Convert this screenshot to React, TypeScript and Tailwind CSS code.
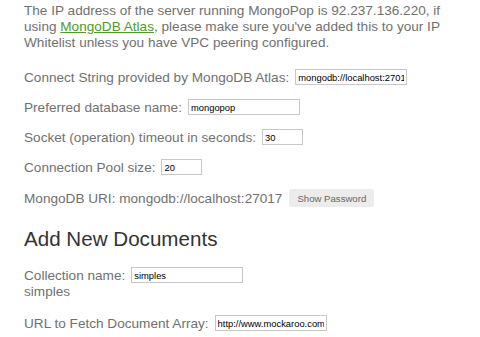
import React from "react"

const font = { fontFamily: '"Liberation Sans", Arial, sans-serif' }

function Field({ label, value, width, top }: { label: string; value: string; width: string; top?: string }) {
  return (
    <div className={`flex items-center leading-[15px] ${top ?? "mt-[14px]"}`}>
      <span>{label}</span>
      <input
        readOnly
        value={value}
        className={`ml-[6px] h-[16px] ${width} border border-[#c8c8c8] bg-white px-[2px] text-[9.4px] text-black outline-none`}
      />
    </div>
  )
}

export default function App() {
  return (
    <div className="w-[480px] h-[337px] overflow-hidden bg-white" style={font}>
      <div className="pl-[24px] pr-[10px] pt-[3px] text-[13.6px] leading-[15px] text-[#717171]">
        {/* notice about the server IP, broken where the reference breaks it */}
        <p className="leading-[16px]">
          The IP address of the server running MongoPop is 92.237.136.220, if
          <br />
          using <a className="text-[#4f9a2a] underline">MongoDB Atlas</a>, please make sure you've added this to your IP
          <br />
          Whitelist unless you have VPC peering configured.
        </p>

        <Field label="Connect String provided by MongoDB Atlas:" value="mongodb://localhost:27017" width="w-[112px]" top="mt-[18px]" />
        <Field label="Preferred database name:" value="mongopop" width="w-[112px]" />
        <Field label="Socket (operation) timeout in seconds:" value="30" width="w-[41px]" />
        <Field label="Connection Pool size:" value="20" width="w-[41px]" />

        <div className="mt-[14px] flex items-center">
          <span>MongoDB URI: mongodb://localhost:27017</span>
          <button className="ml-[7px] h-[18px] rounded-[2px] bg-[#ececec] px-[8px] text-[9.6px] text-[#666]">
            Show Password
          </button>
        </div>

        <h2 className="mt-[20px] text-[20.6px] leading-[24px] text-[#333]">Add New Documents</h2>

        <Field label="Collection name:" value="simples" width="w-[112px]" top="mt-[16px]" />
        <div className="mt-[1px]">simples</div>
        <Field label="URL to Fetch Document Array:" value="http://www.mockaroo.com" width="w-[112px]" top="mt-[16px]" />
      </div>
    </div>
  )
}
